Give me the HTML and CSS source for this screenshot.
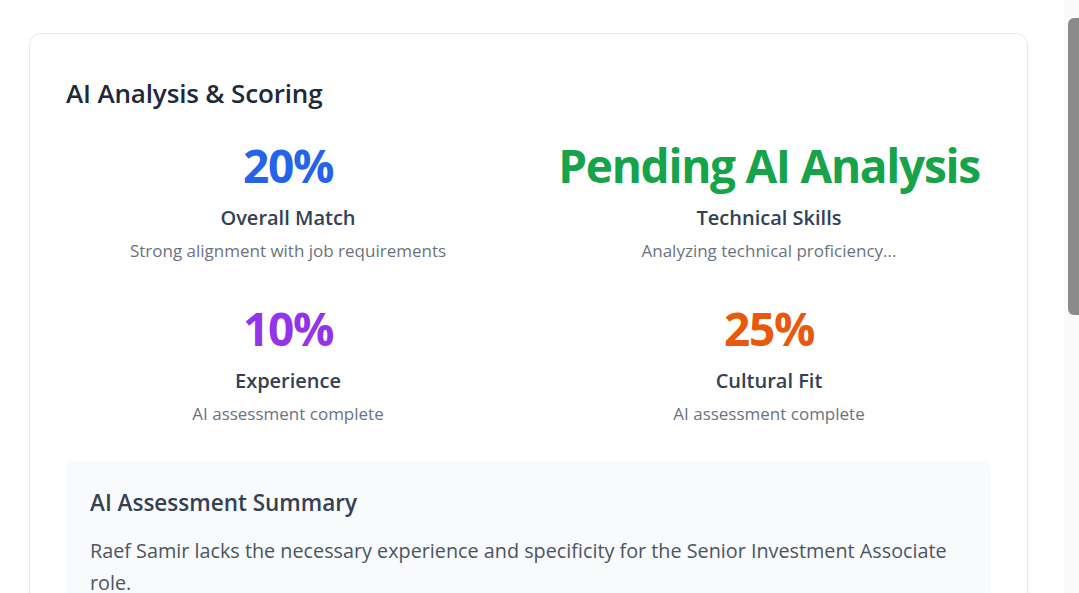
FILE: index.html
```html
<!DOCTYPE html>
<html lang="en">
<head>
<meta charset="utf-8">
<title>AI Analysis &amp; Scoring</title>
<link rel="stylesheet" href="styles.css">
</head>
<body>
<main class="page">
  <section class="card">
    <h2 class="card-title">AI Analysis &amp; Scoring</h2>
    <div class="score-grid">
      <div class="score">
        <div class="score-value blue">20%</div>
        <div class="score-label">Overall Match</div>
        <div class="score-desc">Strong alignment with job requirements</div>
      </div>
      <div class="score">
        <div class="score-value green">Pending AI Analysis</div>
        <div class="score-label">Technical Skills</div>
        <div class="score-desc">Analyzing technical proficiency...</div>
      </div>
      <div class="score">
        <div class="score-value purple">10%</div>
        <div class="score-label">Experience</div>
        <div class="score-desc">AI assessment complete</div>
      </div>
      <div class="score">
        <div class="score-value orange">25%</div>
        <div class="score-label">Cultural Fit</div>
        <div class="score-desc">AI assessment complete</div>
      </div>
    </div>
    <div class="summary">
      <h3 class="summary-title">AI Assessment Summary</h3>
      <p class="summary-text">Raef Samir lacks the necessary experience and specificity for the Senior Investment Associate role.</p>
    </div>
    <div class="spacer"></div>
  </section>
</main>
<div class="scrollbar" aria-hidden="true"><div class="scrollbar-thumb"></div></div>
</body>
</html>
```
FILE: styles.css
```css
html, body {
  margin: 0;
  padding: 0;
  background: #ffffff;
}
body {
  font-family: "Open Sans", "Noto Sans", sans-serif;
  color: #1f2937;
}
.page {
  padding: 33px 51px 40px 29px;
}
.card {
  border: 1px solid #e5e7eb;
  border-radius: 12px;
  padding: 41px 36px 36px 36px;
  background: #fff;
}
.card-title {
  margin: 0;
  font-size: 26px;
  line-height: 36px;
  font-weight: 600;
  color: #1e293b;
  letter-spacing: -0.15px;
}
.score-grid {
  margin-top: 24px;
  display: grid;
  grid-template-columns: 1fr 1fr;
  column-gap: 37px;
  row-gap: 35px;
}
.score {
  display: flex;
  flex-direction: column;
  align-items: center;
  text-align: center;
}
.score-value {
  font-size: 46px;
  line-height: 60px;
  font-weight: 700;
  letter-spacing: -1.3px;
}
.blue { color: #2563eb; }
.green { color: #16a34a; }
.purple { color: #9333ea; }
.orange { color: #ea580c; }
.score-label {
  margin-top: 9px;
  font-size: 20px;
  line-height: 28px;
  font-weight: 600;
  color: #334155;
}
.score-desc {
  margin-top: 7px;
  font-size: 17px;
  line-height: 24px;
  color: #6b7280;
}
.summary {
  margin-top: 35px;
  background: #f8fafc;
  border-radius: 8px;
  padding: 26px 24px 24px 24px;
}
.summary-title {
  margin: 0;
  font-size: 22.5px;
  line-height: 32px;
  font-weight: 600;
  color: #334155;
}
.summary-text {
  margin: 16px 0 0 0;
  font-size: 19.8px;
  line-height: 32px;
  color: #4b5563;
}
.spacer {
  height: 480px;
}
.scrollbar {
  position: fixed;
  top: 0;
  right: 0;
  width: 15px;
  height: 100vh;
  background: #fafafa;
}
.scrollbar-thumb {
  position: absolute;
  top: 18px;
  left: 4px;
  width: 11px;
  height: 297px;
  border-radius: 6px 0 0 6px;
  background: #8b8b8b;
}
```
